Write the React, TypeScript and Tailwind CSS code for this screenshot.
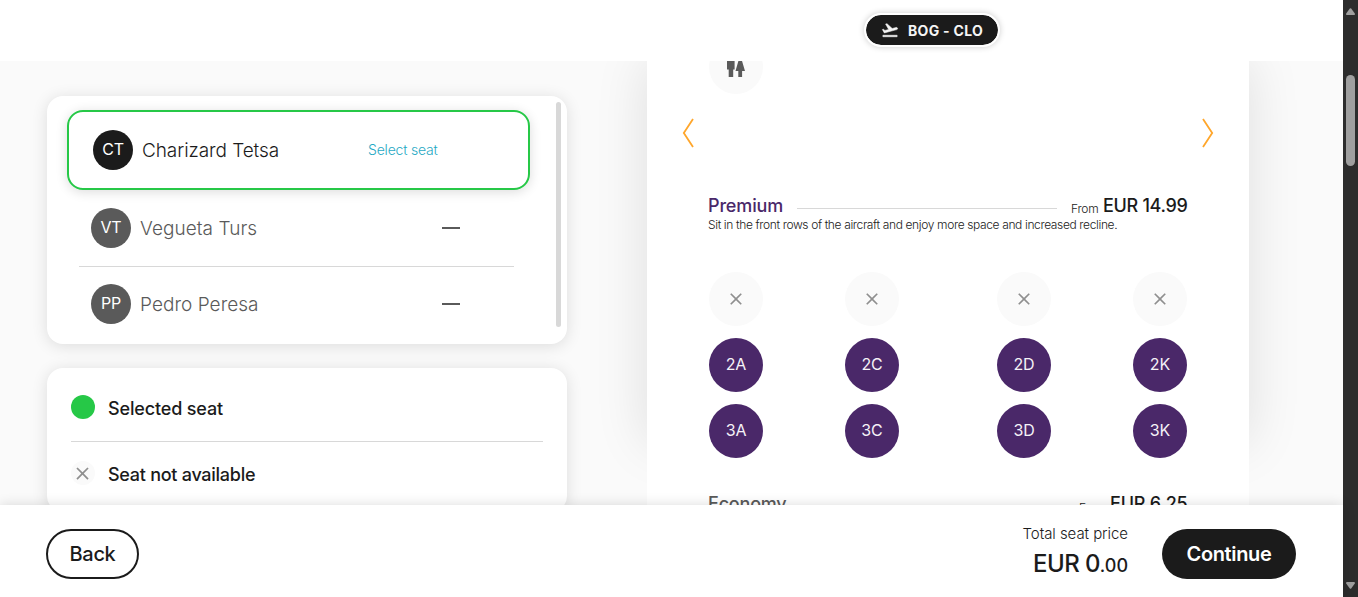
import React from "react";
import { MdClose } from "react-icons/md";

function TakeoffIcon() {
  return (
    <svg width="18" height="18" viewBox="0 0 24 24" fill="currentColor" stroke="currentColor" strokeWidth="0.7">
      <path d="M2.5 19h19v2h-19v-2zm19.57-9.36c-.21-.8-1.04-1.28-1.84-1.06L14.92 10l-6.9-6.43-1.93.51 4.14 7.17-4.97 1.33-1.97-1.54-1.45.39 2.59 4.49L21 11.49c.81-.23 1.28-1.05 1.07-1.85z" />
    </svg>
  );
}

function RestroomIcon() {
  return (
    <svg width="18" height="26" viewBox="0 0 18 26" fill="currentColor">
      <circle cx="4" cy="2" r="2" />
      <path d="M0 6Q0 5 1 5H6.6Q7.6 5 7.6 6V18.5H6.2V26H1.7V18.5H0Z" />
      <circle cx="13.2" cy="2" r="2" />
      <path d="M12.4 6.5H14L18 20H15.1V26H11.3V20H8.5Z" />
    </svg>
  );
}

function Passenger({ initials, name, last }: { initials: string; name: string; last?: boolean }) {
  return (
    <div className={`ml-8 flex w-[435px] items-center border-[#d8d8d8] pl-3 text-[#5a5a5a] ${last ? "h-[74px]" : "h-[77px] border-b"}`}>
      <span className="flex size-10 shrink-0 items-center justify-center rounded-full bg-[#5a5a5a] pb-0.5 text-[16px] tracking-[-0.3px] text-white">
        {initials}
      </span>
      <span className="ml-[9px] w-[302px] pt-0.5 text-[19px] font-light tracking-[0.05px]">{name}</span>
      <span className="h-0.5 w-[18px] bg-[#5a5a5a]" />
    </div>
  );
}

function Chevron({ flip }: { flip?: boolean }) {
  return (
    <svg width="12" height="30" viewBox="0 0 12 30" fill="none" stroke="#ffa62b" strokeWidth="1.8" className={flip ? "-scale-x-100" : ""}>
      <path d="M11 1L1.8 15L11 29" />
    </svg>
  );
}

function Seat({ label }: { label?: string }) {
  return label ? (
    <button className="flex size-[54px] items-center justify-center rounded-full bg-[#4a2869] pb-0.5 text-[16px] tracking-[-0.1px] text-[#f5f2f7]">
      {label}
    </button>
  ) : (
    <span className="flex size-[54px] items-center justify-center rounded-full bg-[#fafafa] text-[#8f8f8f]">
      <MdClose size={20} />
    </span>
  );
}

function SeatRow({ row }: { row?: number }) {
  const seat = (letter: string) => <Seat label={row ? `${row}${letter}` : undefined} />;
  return (
    <div className="ml-[62px] flex w-[478px] justify-between">
      <div className="flex gap-[82px]">
        {seat("A")}
        {seat("C")}
      </div>
      <div className="flex gap-[82px]">
        {seat("D")}
        {seat("K")}
      </div>
    </div>
  );
}

export default function App() {
  return (
    <div className="flex h-[597px] w-[1358px] overflow-hidden bg-white font-['Inter',sans-serif] text-[#1b1b1b]">
      <div className="flex w-[1343px] flex-col">
        <header className="flex h-[61px] shrink-0 justify-end pt-[13px] pr-[343px]">
          <div className="flex h-[34px] w-[136px] items-center rounded-full border-2 border-white bg-[#1b1b1b] bg-clip-padding pl-[15px] text-[#f5f5f5] shadow-[0_0_6px_rgba(0,0,0,0.2)]">
            <TakeoffIcon />
            <span className="ml-[9px] text-[14px] font-bold tracking-[0.3px]">BOG - CLO</span>
          </div>
        </header>

        <main className="flex h-[444px] shrink-0 overflow-hidden bg-[#fafafa] pl-[47px]">
          <div className="w-[520px] shrink-0 pt-[35px]">
            <section className="flex h-[248px] rounded-2xl bg-white shadow-[0_2px_16px_rgba(0,0,0,0.12)]">
              <div className="w-[509px] pt-3.5">
                <div className="ml-5 flex h-20 w-[463px] items-center rounded-2xl border-2 border-[#26c847] pl-6 shadow-[0_2px_12px_rgba(0,0,0,0.14)]">
                  <span className="flex size-10 shrink-0 items-center justify-center rounded-full bg-[#1b1b1b] pb-0.5 text-[16px] tracking-[-0.3px] text-white">
                    CT
                  </span>
                  <span className="ml-[9px] w-[226px] pt-0.5 text-[19px] font-light tracking-[-0.08px]">Charizard Tetsa</span>
                  <span className="pb-0.5 text-[14px] font-light tracking-[-0.2px] text-[#1fa9c4]">Select seat</span>
                </div>
                <Passenger initials="VT" name="Vegueta Turs" />
                <Passenger initials="PP" name="Pedro Peresa" last />
              </div>
              <span className="mt-1.5 h-[225px] w-[5px] rounded-full bg-[#d8d8d8]" />
            </section>

            <section className="mt-6 h-[144px] rounded-2xl bg-white px-6 shadow-[0_2px_16px_rgba(0,0,0,0.12)]">
              <div className="flex h-[74px] items-center border-b border-[#d8d8d8] pt-1">
                <span className="size-6 rounded-full bg-[#26c847]" />
                <span className="ml-[13px] pt-1 text-[18px] font-medium tracking-[-0.15px]">Selected seat</span>
              </div>
              <div className="flex h-[62px] items-center">
                <span className="flex size-6 items-center justify-center rounded-full bg-[#fafafa] pr-px text-[#8f8f8f]">
                  <MdClose size={21} />
                </span>
                <span className="ml-[13px] pt-0.5 text-[18px] font-medium tracking-[-0.27px]">Seat not available</span>
              </div>
            </section>
          </div>

          <div className="ml-20 h-[382px] w-[602px] shrink-0 shadow-[0_0_50px_rgba(0,0,0,0.115)]">
            <div className="relative flow-root h-[444px] bg-white">
              <span className="-mt-[21px] ml-[62px] flex size-[54px] items-end justify-center rounded-full bg-[#fafafa] pb-[17px] text-[#5a5a5a]">
                <RestroomIcon />
              </span>
              <div className="mt-6 flex justify-between px-[35px]">
                <Chevron />
                <Chevron flip />
              </div>
              <div className="mt-12 ml-[61px] flex h-5 w-[480px] items-baseline leading-5">
                <h2 className="w-[75px] text-[18px] font-medium tracking-[-0.15px] whitespace-nowrap text-[#4a2869]">Premium</h2>
                <span className="ml-3.5 h-px w-[260px] -translate-y-[3px] bg-[#d8d8d8]" />
                <span className="ml-3.5 w-8 translate-y-px text-[12px] font-light tracking-[-0.2px] whitespace-nowrap">From</span>
                <span className="text-[18px] font-medium tracking-[-0.3px] whitespace-nowrap">EUR 14.99</span>
              </div>
              <p className="ml-[61px] h-[18px] text-[12px] leading-[18px] font-light tracking-[-0.37px] whitespace-nowrap">
                Sit in the front rows of the aircraft and enjoy more space and increased recline.
              </p>
              <div className="mt-[38px] flex flex-col gap-3">
                <SeatRow />
                <SeatRow row={2} />
                <SeatRow row={3} />
              </div>
              <div className="mt-9 ml-[61px] flex w-[480px] items-baseline leading-5">
                <h2 className="w-[78px] text-[18px] font-medium tracking-[-0.2px] whitespace-nowrap text-[#5a5a5a]">Economy</h2>
                <span className="ml-[293px] w-[31px] translate-y-0.5 text-[12px] font-light tracking-[-0.2px] whitespace-nowrap">From</span>
                <span className="text-[18px] font-medium tracking-[-0.2px] whitespace-nowrap">EUR 6.25</span>
              </div>
            </div>
          </div>
        </main>

        <footer className="relative flex h-[92px] shrink-0 bg-white pt-6 pl-[46px] shadow-[0_0_12px_rgba(0,0,0,0.14)]">
          <button className="flex h-[50px] w-[93px] items-center justify-center rounded-full border-2 border-[#1b1b1b] text-[20px] font-medium tracking-[-0.3px]">Back</button>
          <div className="-mt-[5px] ml-[789px] w-[200px] text-right">
            <div className="text-[15px] leading-5 font-light tracking-[-0.06px] whitespace-nowrap">Total seat price</div>
            <div className="mt-[2px] text-[24px] leading-9 font-medium tracking-[-0.6px] whitespace-nowrap">
              EUR 0<span className="text-[18px] tracking-[0px]">.00</span>
            </div>
          </div>
          <button className="ml-[34px] flex h-[50px] w-[134px] items-center justify-center rounded-full bg-[#1b1b1b] text-[20px] font-semibold tracking-[-0.35px] text-white">
            Continue
          </button>
        </footer>
      </div>

      <div className="flex w-[15px] shrink-0 flex-col items-center bg-[#2c2c2c] pt-2 pb-2">
        <svg width="9" height="7" viewBox="0 0 9 7" fill="#9f9f9f">
          <path d="M3.8 .6Q4.5 -.2 5.2 .6L8.8 5.5Q9.2 7 8 7H1Q-.2 7 .2 5.5Z" />
        </svg>
        <span className="mt-[60px] h-[91px] w-[9px] rounded-full bg-[#9f9f9f]" />
        <svg className="mt-auto" width="9" height="7" viewBox="0 0 9 7" fill="#9f9f9f">
          <path d="M3.8 6.4Q4.5 7.2 5.2 6.4L8.8 1.5Q9.2 0 8 0H1Q-.2 0 .2 1.5Z" />
        </svg>
      </div>
    </div>
  );
}
